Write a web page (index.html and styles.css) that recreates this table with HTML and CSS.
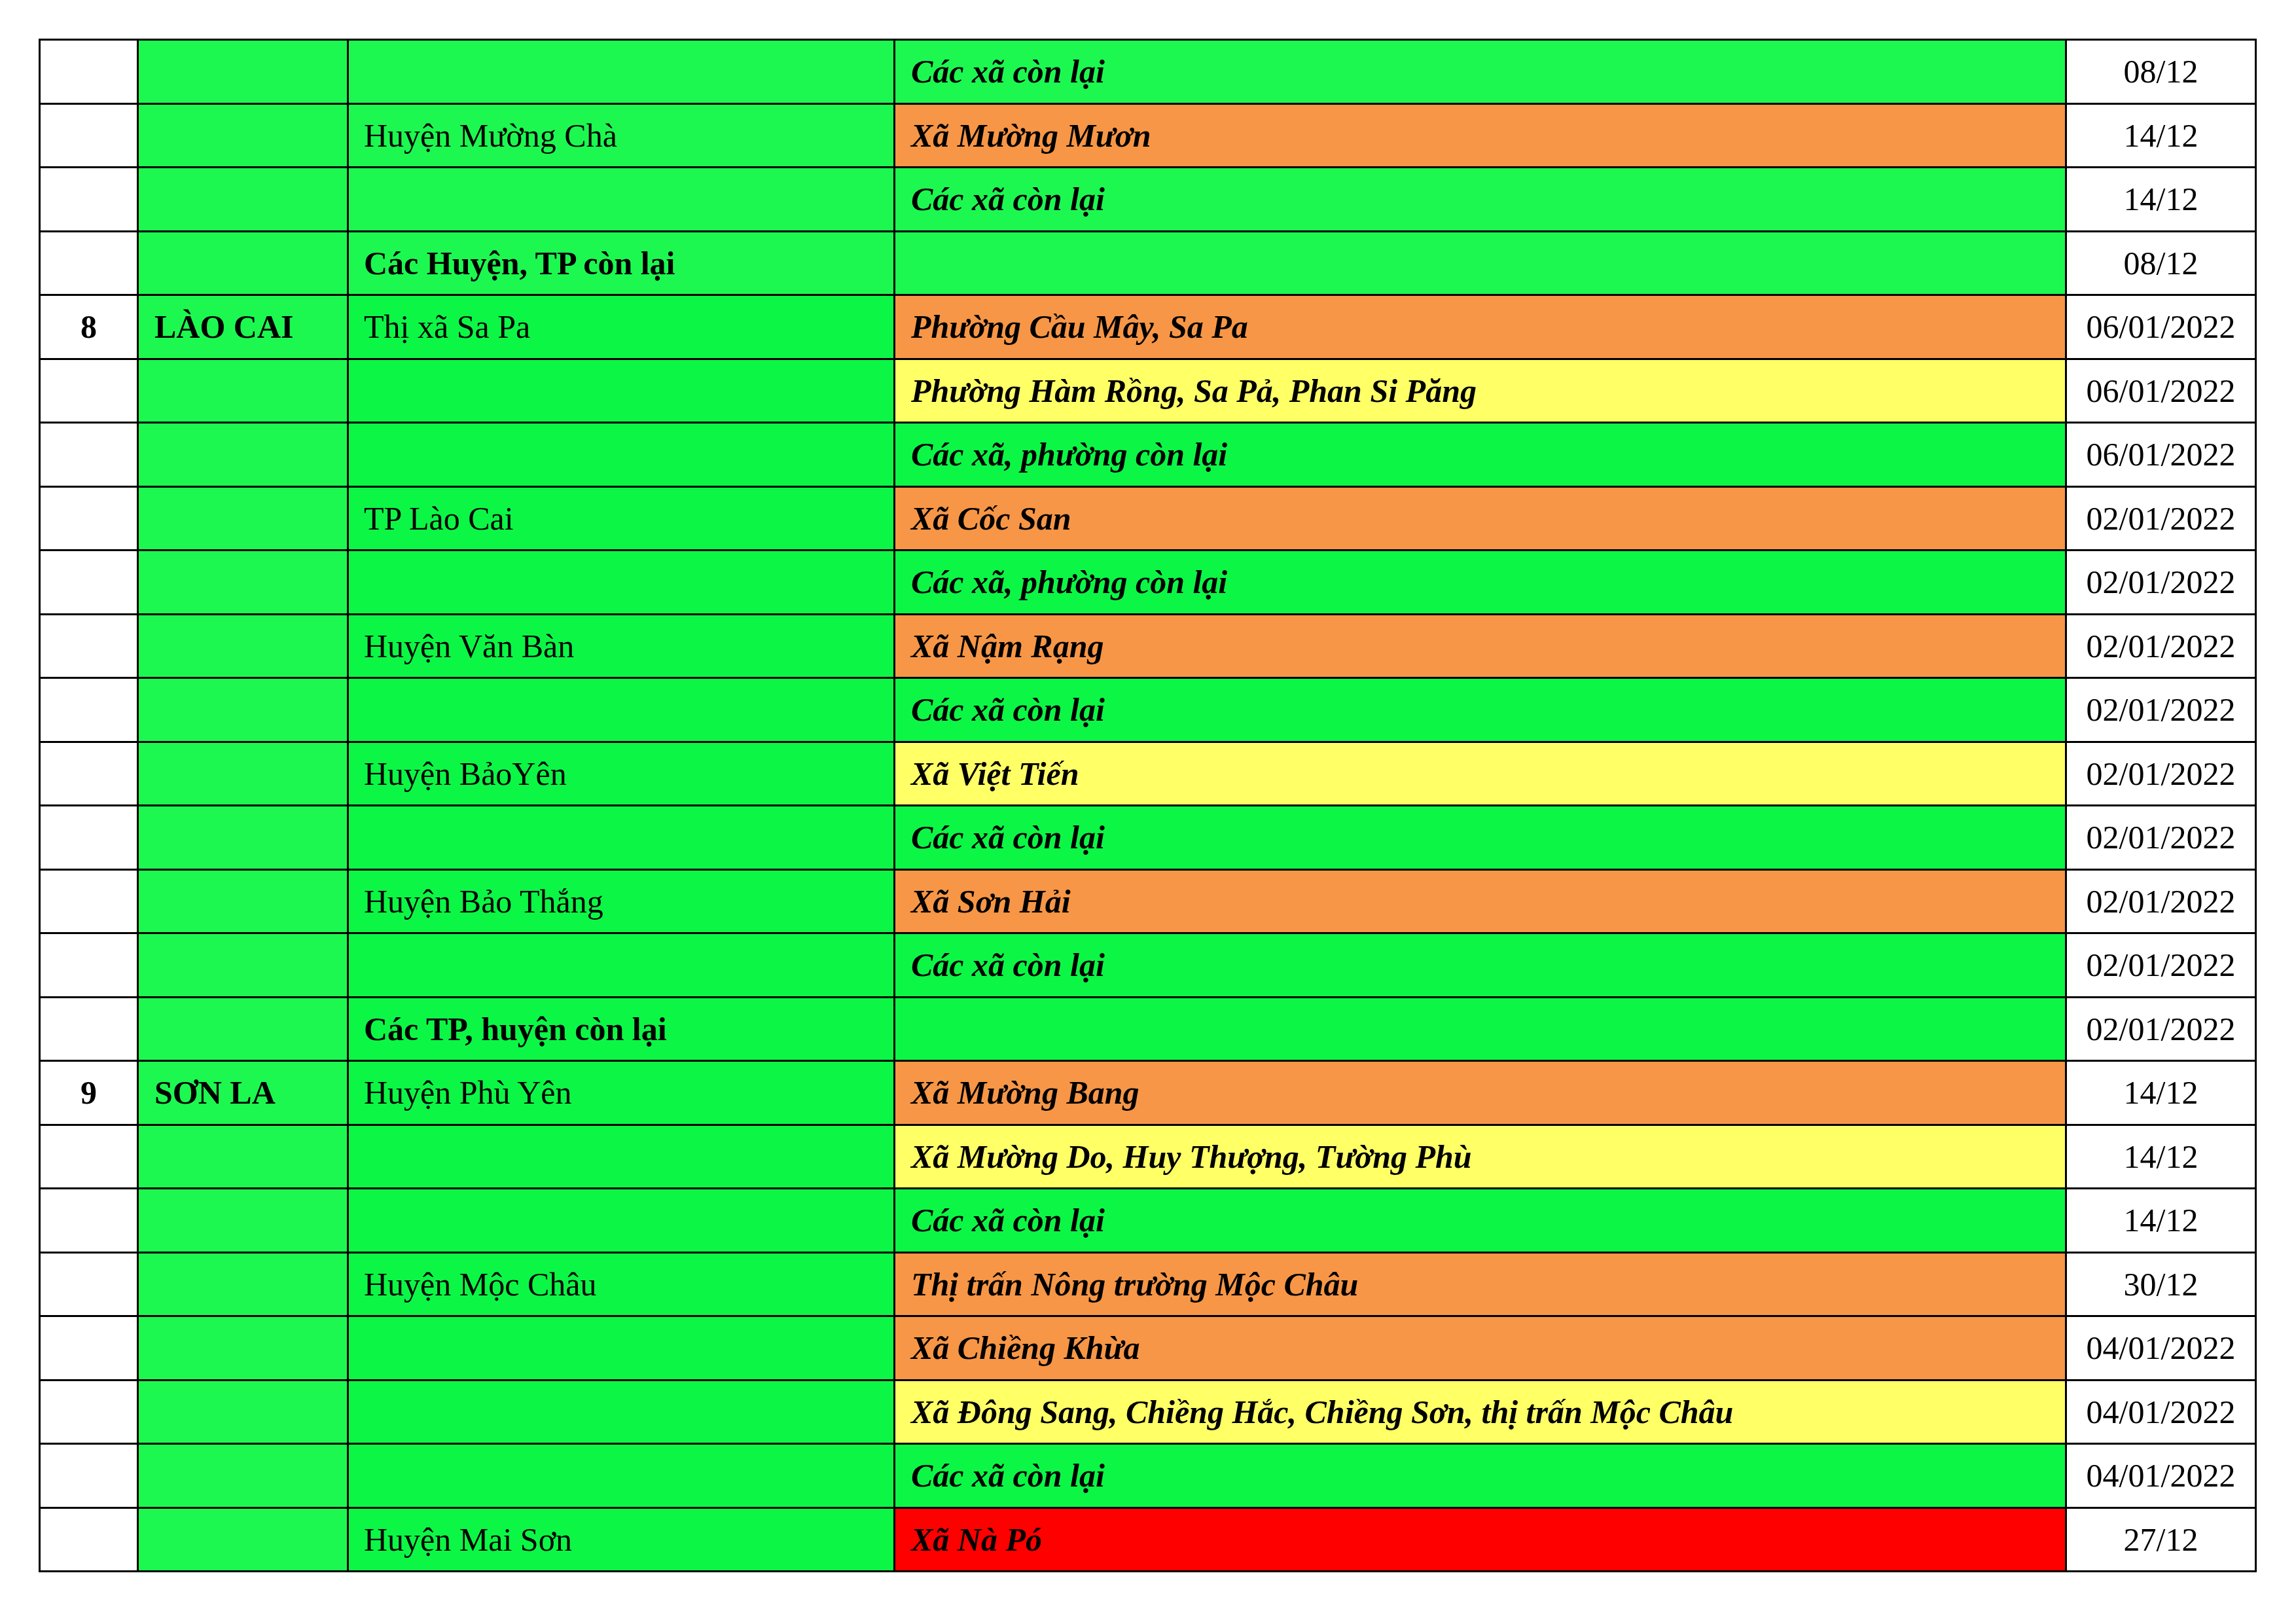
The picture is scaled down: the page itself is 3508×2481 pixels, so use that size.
FILE: index.html
```html
<!DOCTYPE html>
<html lang="vi">
<head>
<meta charset="utf-8">
<title>Bảng</title>
<link rel="stylesheet" href="styles.css">
</head>
<body>
<div class="sheet">
  <div class="grid">
    <div class="c c1"></div><div class="c c2"></div><div class="c c3 g1"></div><div class="c c4 g1">Các xã còn lại</div><div class="c c5">08/12</div>
    <div class="c c1"></div><div class="c c2"></div><div class="c c3 g1">Huyện Mường Chà</div><div class="c c4 or">Xã Mường Mươn</div><div class="c c5">14/12</div>
    <div class="c c1"></div><div class="c c2"></div><div class="c c3 g1"></div><div class="c c4 g1">Các xã còn lại</div><div class="c c5">14/12</div>
    <div class="c c1"></div><div class="c c2"></div><div class="c c3 g1 b">Các Huyện, TP còn lại</div><div class="c c4 g1"></div><div class="c c5">08/12</div>

    <div class="c c1">8</div><div class="c c2">LÀO CAI</div><div class="c c3 g2">Thị xã Sa Pa</div><div class="c c4 or">Phường Cầu Mây, Sa Pa</div><div class="c c5">06/01/2022</div>
    <div class="c c1"></div><div class="c c2"></div><div class="c c3 g2"></div><div class="c c4 ye">Phường Hàm Rồng, Sa Pả, Phan Si Păng</div><div class="c c5">06/01/2022</div>
    <div class="c c1"></div><div class="c c2"></div><div class="c c3 g2"></div><div class="c c4 g2">Các xã, phường còn lại</div><div class="c c5">06/01/2022</div>
    <div class="c c1"></div><div class="c c2"></div><div class="c c3 g2">TP Lào Cai</div><div class="c c4 or">Xã Cốc San</div><div class="c c5">02/01/2022</div>
    <div class="c c1"></div><div class="c c2"></div><div class="c c3 g2"></div><div class="c c4 g2">Các xã, phường còn lại</div><div class="c c5">02/01/2022</div>
    <div class="c c1"></div><div class="c c2"></div><div class="c c3 g2">Huyện Văn Bàn</div><div class="c c4 or">Xã Nậm Rạng</div><div class="c c5">02/01/2022</div>
    <div class="c c1"></div><div class="c c2"></div><div class="c c3 g2"></div><div class="c c4 g2">Các xã còn lại</div><div class="c c5">02/01/2022</div>
    <div class="c c1"></div><div class="c c2"></div><div class="c c3 g2">Huyện BảoYên</div><div class="c c4 ye">Xã Việt Tiến</div><div class="c c5">02/01/2022</div>
    <div class="c c1"></div><div class="c c2"></div><div class="c c3 g2"></div><div class="c c4 g2">Các xã còn lại</div><div class="c c5">02/01/2022</div>
    <div class="c c1"></div><div class="c c2"></div><div class="c c3 g2">Huyện Bảo Thắng</div><div class="c c4 or">Xã Sơn Hải</div><div class="c c5">02/01/2022</div>
    <div class="c c1"></div><div class="c c2"></div><div class="c c3 g2"></div><div class="c c4 g2">Các xã còn lại</div><div class="c c5">02/01/2022</div>
    <div class="c c1"></div><div class="c c2"></div><div class="c c3 g2 b">Các TP, huyện còn lại</div><div class="c c4 g2"></div><div class="c c5">02/01/2022</div>

    <div class="c c1">9</div><div class="c c2">SƠN LA</div><div class="c c3 g2">Huyện Phù Yên</div><div class="c c4 or">Xã Mường Bang</div><div class="c c5">14/12</div>
    <div class="c c1"></div><div class="c c2"></div><div class="c c3 g2"></div><div class="c c4 ye">Xã Mường Do, Huy Thượng, Tường Phù</div><div class="c c5">14/12</div>
    <div class="c c1"></div><div class="c c2"></div><div class="c c3 g2"></div><div class="c c4 g2">Các xã còn lại</div><div class="c c5">14/12</div>
    <div class="c c1"></div><div class="c c2"></div><div class="c c3 g2">Huyện Mộc Châu</div><div class="c c4 or">Thị trấn Nông trường Mộc Châu</div><div class="c c5">30/12</div>
    <div class="c c1"></div><div class="c c2"></div><div class="c c3 g2"></div><div class="c c4 or">Xã Chiềng Khừa</div><div class="c c5">04/01/2022</div>
    <div class="c c1"></div><div class="c c2"></div><div class="c c3 g2"></div><div class="c c4 ye">Xã Đông Sang, Chiềng Hắc, Chiềng Sơn, thị trấn Mộc Châu</div><div class="c c5">04/01/2022</div>
    <div class="c c1"></div><div class="c c2"></div><div class="c c3 g2"></div><div class="c c4 g2">Các xã còn lại</div><div class="c c5">04/01/2022</div>
    <div class="c c1"></div><div class="c c2"></div><div class="c c3 g2">Huyện Mai Sơn</div><div class="c c4 re">Xã Nà Pó</div><div class="c c5">27/12</div>
  </div>
</div>
</body>
</html>
```

FILE: styles.css
```css
html, body {
  margin: 0;
  padding: 0;
  background: #ffffff;
}

.sheet {
  padding: 59px 0 0 59px;
}

.grid {
  display: grid;
  grid-template-columns: 150px 321px 835px 1790px 290px;
  grid-auto-rows: 97.5px;
  width: max-content;
  border-top: 3px solid #000;
  border-left: 3px solid #000;
  font-family: "Liberation Serif", "Times New Roman", serif;
  font-size: 50px;
  color: #000;
}

.c {
  box-sizing: border-box;
  border-right: 3px solid #000;
  border-bottom: 3px solid #000;
  display: flex;
  align-items: center;
  padding: 0 22px;
  white-space: nowrap;
  overflow: hidden;
  background: #ffffff;
}

.c1 {
  justify-content: center;
  font-weight: bold;
  padding: 0;
}

.c2 {
  background: #1cf850;
  font-weight: bold;
  padding-left: 24px;
}

.c3 {
  padding-left: 23px;
}

.c4 {
  font-weight: bold;
  font-style: italic;
  padding-left: 24px;
}

.c5 {
  justify-content: center;
  padding: 0;
}

.b {
  font-weight: bold;
}

.g1 { background: #1cf850; }
.g2 { background: #0cf646; }
.or { background: #f79646; }
.ye { background: #ffff66; }
.re { background: #ff0000; }
```
